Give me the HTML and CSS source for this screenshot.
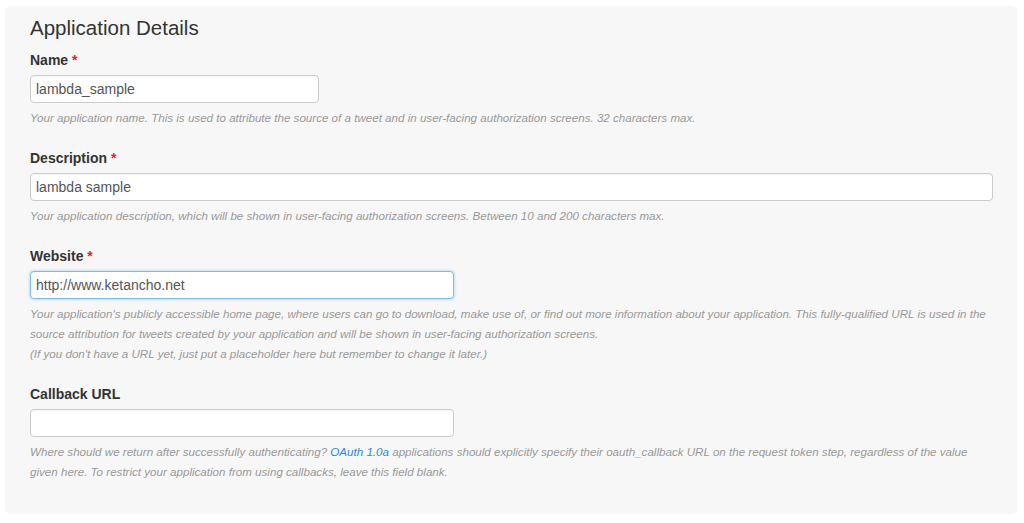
FILE: index.html
```html
<!DOCTYPE html>
<html>
<head>
<link rel="stylesheet" href="styles.css">
</head>
<body>

<div class="panel">
  <h2>Application Details</h2>

  <div class="group">
    <label for="name">Name <span class="req">*</span></label>
    <input type="text" id="name" class="short" value="lambda_sample">
    <p class="help">Your application name. This is used to attribute the source of a tweet and in user-facing authorization screens. 32 characters max.</p>
  </div>

  <div class="group">
    <label for="description">Description <span class="req">*</span></label>
    <input type="text" id="description" class="wide" value="lambda sample">
    <p class="help">Your application description, which will be shown in user-facing authorization screens. Between 10 and 200 characters max.</p>
  </div>

  <div class="group">
    <label for="website">Website <span class="req">*</span></label>
    <input type="text" id="website" class="medium focused" value="http://www.ketancho.net">
    <p class="help">Your application's publicly accessible home page, where users can go to download, make use of, or find out more information about your application. This fully-qualified URL is used in the source attribution for tweets created by your application and will be shown in user-facing authorization screens.<br>
    (If you don't have a URL yet, just put a placeholder here but remember to change it later.)</p>
  </div>

  <div class="group">
    <label for="callback">Callback URL</label>
    <input type="text" id="callback" class="medium" value="">
    <p class="help">Where should we return after successfully authenticating? <a href="#">OAuth 1.0a</a> applications should explicitly specify their oauth_callback URL on the request token step, regardless of the value given here. To restrict your application from using callbacks, leave this field blank.</p>
  </div>
</div>

</body>
</html>
```

FILE: styles.css
```css
* {
  box-sizing: border-box;
}

body {
  margin: 0;
  background-color: #fff;
  font-family: "Liberation Sans", Arial, sans-serif;
  color: #333;
}

.panel {
  margin: 6px 7px 0 5px;
  height: 508px;
  padding: 11px 24px 0 25px;
  background-color: #f7f7f7;
  border-radius: 5px;
}

h2 {
  margin: 0 0 11px 0;
  font-size: 20.5px;
  line-height: 22px;
  font-weight: normal;
  color: #333;
}

.group {
  margin-bottom: 20px;
}

label {
  display: block;
  margin-bottom: 5px;
  font-size: 14px;
  line-height: 20px;
  font-weight: bold;
  color: #333;
}

.req {
  color: #e0252b;
}

input[type=text] {
  display: block;
  height: 28px;
  padding: 4px 5px;
  font-family: "Liberation Sans", Arial, sans-serif;
  font-size: 14px;
  line-height: 18px;
  color: #555;
  background-color: #fff;
  border: 1px solid #ccc;
  border-radius: 4px;
  box-shadow: inset 0 1px 1px rgba(0, 0, 0, 0.04);
  outline: none;
}

input.short {
  width: 289px;
}

input.medium {
  width: 424px;
}

input.wide {
  width: 100%;
}

input.focused {
  border-color: #7dbcf0;
  box-shadow: 0 0 3px rgba(102, 175, 233, 0.7);
}

.help {
  margin: 5px 0 0 0;
  font-size: 11.6px;
  line-height: 20px;
  font-style: italic;
  color: #999;
}

.help a {
  color: #2a8bd0;
  text-decoration: none;
}
```
